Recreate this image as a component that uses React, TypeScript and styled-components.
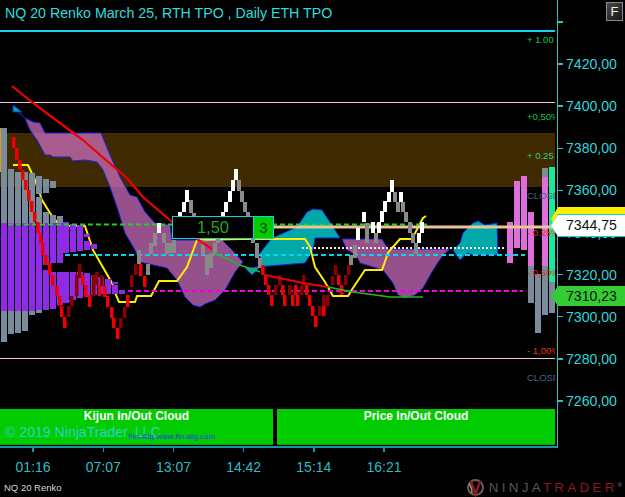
import React from "react";
import styled, { createGlobalStyle } from "styled-components";

const GlobalStyle = createGlobalStyle`
  html, body {
    margin: 0;
    padding: 0;
    background: #000;
    overflow: hidden;
  }
  body {
    font-family: "Liberation Sans", Arial, sans-serif;
  }
`;

const Page = styled.div`
  width: 625px;
  height: 497px;
  display: flex;
  flex-direction: column;
  position: relative;
  overflow: hidden;
  background: #000;
`;

const ChartRow = styled.div`
  display: flex;
  height: 448px;
`;

const Plot = styled.div`
  position: relative;
  width: 557px;
  height: 446px;
  border-right: 1.5px solid #1fc4cc;
  border-bottom: 2px solid #1a93a5;
  overflow: hidden;
  display: flex;
  flex-direction: column;
  justify-content: space-between;
`;

const ChartSvg = styled.svg`
  position: absolute;
  left: 0;
  top: 0;
`;

const TitleBar = styled.div`
  position: relative;
  height: 30px;
  margin-right: 2px;
  border-bottom: 2px solid #13d6ec;
  padding-left: 5px;
  color: #2fdcdc;
  font-size: 14.2px;
  line-height: 26px;
  white-space: nowrap;
`;

const CloudRow = styled.div`
  position: relative;
  display: flex;
  gap: 4px;
  height: 36px;
  margin-right: 2px;
  margin-bottom: 1px;
`;

const CloudPanel = styled.div<{ $width: number }>`
  position: relative;
  width: ${(p) => p.$width}px;
  background: #00cc00;
  border-bottom: 1px solid #00a800;
  color: #fff;
  font-size: 12px;
  font-weight: 700;
  line-height: 14px;
  text-align: center;
`;

const Copyright = styled.span`
  position: absolute;
  left: 5px;
  top: 16px;
  color: #2fd0c8;
  font-size: 14.1px;
  font-weight: 400;
  white-space: nowrap;
`;

const Watermark = styled.span`
  position: absolute;
  left: 128px;
  top: 21px;
  color: #1f62c4;
  font-size: 7.5px;
  font-weight: 700;
  white-space: nowrap;
`;

const LevelLabel = styled.span<{ $top: number; $color: string }>`
  position: absolute;
  left: 527px;
  top: ${(p) => p.$top}px;
  width: 28px;
  overflow: hidden;
  color: ${(p) => p.$color};
  font-size: 9.5px;
  line-height: 12px;
  white-space: nowrap;
`;

const PriceAxis = styled.div`
  display: flex;
  flex-direction: column;
  padding-top: 1px;
  flex: 1;
`;

const PriceRow = styled.div`
  display: flex;
  align-items: center;
  gap: 3px;
  height: 42.1px;
  color: #2fd6dc;
  font-size: 14.1px;
  white-space: nowrap;
`;

const PriceTick = styled.i`
  display: block;
  width: 5px;
  height: 1.5px;
  background: #1fc4cc;
`;

const TimeAxis = styled.div`
  display: flex;
  margin-left: -2px;
  height: 30px;
`;

const TimeCell = styled.div`
  width: 70.2px;
  display: flex;
  flex-direction: column;
  align-items: center;
  color: #2cbcc8;
  font-size: 14px;
`;

const TimeTick = styled.i`
  display: block;
  width: 1.5px;
  height: 4px;
  margin-bottom: 7px;
  background: #1a93a5;
`;

const Footer = styled.div`
  display: flex;
  justify-content: space-between;
  align-items: center;
  height: 19px;
  padding: 0 3px 0 4px;
  color: #d8d8d8;
  font-size: 9.5px;
`;

const Logo = styled.div`
  display: flex;
  align-items: center;
  gap: 4px;
  font-size: 13.5px;
  letter-spacing: 3.2px;
  white-space: nowrap;
`;

const LogoNinja = styled.span`
  color: #5c5650;
`;

const LogoTrader = styled.span`
  color: #8c1a1e;
`;

const LogoMarkReg = styled.sup`
  color: #8a8a8a;
  font-size: 6px;
  letter-spacing: 0;
`;

const FullscreenButton = styled.div`
  position: absolute;
  left: 606px;
  top: 2px;
  width: 15px;
  height: 17px;
  border: 1px solid #8a8a8a;
  background: linear-gradient(135deg, #4a4a4a, #141414);
  color: #f2f2f2;
  font-size: 13px;
  line-height: 17px;
  text-align: center;
`;

const PriceTag = styled.div<{ $top: number; $height: number; $bg: string }>`
  position: absolute;
  left: 551px;
  top: ${(p) => p.$top}px;
  width: 74px;
  height: ${(p) => p.$height}px;
  box-sizing: border-box;
  padding-left: 15px;
  background: ${(p) => p.$bg};
  clip-path: polygon(0 50%, 7px 0, 100% 0, 100% 100%, 7px 100%);
  color: #111;
  font-size: 14.1px;
  line-height: ${(p) => p.$height}px;
`;

const Bar = ({ x, y1, y2, fill, w = 6 }: { x: number; y1: number; y2: number; fill: string; w?: number }) => (
  <rect x={x} y={y1} width={w} height={y2 - y1} fill={fill} />
);

const GREY = "#7a8c9c";
const PURPLE = "#8f2be6";
const PINK = "#dc6fdc";

// x, top, bottom of the tpo profile on the left
const greyBars = [
  [1, 128, 223], [8, 169, 223], [15, 172, 223], [22, 172, 223], [29, 173, 223],
  [36, 176, 194], [36, 197, 223], [43, 179, 193], [43, 212, 223], [50, 181, 188],
  [50, 215, 223], [57, 216, 223],
  [1, 311, 342], [8, 311, 334], [15, 311, 333], [22, 311, 331], [29, 311, 315], [36, 310, 313],
];

const purpleBars = [
  [1, 223, 311], [8, 223, 311], [15, 223, 311], [22, 223, 311], [29, 223, 311], [36, 223, 310],
  [43, 223, 265], [43, 270, 310], [50, 223, 263], [50, 272, 309], [57, 223, 263], [57, 272, 305],
  [63, 222, 253], [63, 272, 303], [70, 224, 252], [70, 272, 300], [77, 225, 251], [77, 272, 298],
  [84, 234, 237], [84, 241, 250], [84, 273, 297], [91, 244, 249], [91, 275, 295], [98, 277, 294],
  [105, 279, 294], [112, 285, 294], [112, 282, 284], [119, 290, 294], [64, 300, 302],
];

const pinkBars = [
  [507, 222, 263, PINK], [514, 181, 248, PINK], [521, 176, 250, PINK], [528, 212, 266, PINK],
  [528, 266, 303, GREY], [535, 274, 333, GREY], [542, 168, 177, GREY], [542, 177, 266, PINK],
  [542, 266, 315, GREY], [549, 282, 313, GREY],
] as const;

type Candle = [number, number, number, "r" | "d" | "w" | "g"];

const candles: Candle[] = [
  [12, 137, 148, "r"], [15, 148, 160, "r"], [18, 160, 170, "r"], [21, 170, 180, "r"], [24, 180, 190, "r"],
  [27, 190, 201, "r"], [30, 201, 212, "r"], [33, 212, 222, "r"], [36, 222, 233, "r"], [39, 233, 243, "r"],
  [41, 243, 255, "r"], [44, 255, 265, "r"], [48, 263, 275, "r"], [51, 275, 286, "r"], [55, 286, 296, "r"],
  [58, 296, 306, "r"], [60, 306, 317, "r"], [63, 317, 328, "r"], [67, 306, 317, "d"], [70, 296, 306, "d"],
  [75, 275, 296, "d"], [78, 264, 278, "d"], [81, 275, 285, "r"], [84, 285, 297, "r"], [88, 295, 307, "r"],
  [92, 275, 296, "d"], [95, 272, 285, "d"], [98, 285, 296, "r"], [100, 275, 286, "d"], [103, 286, 297, "r"],
  [106, 296, 307, "r"], [110, 307, 318, "r"], [112, 318, 328, "r"], [116, 328, 339, "r"], [119, 318, 328, "d"],
  [123, 307, 318, "d"], [126, 295, 307, "r"], [130, 275, 287, "d"], [134, 264, 275, "d"], [139, 264, 276, "r"],
  [143, 276, 287, "r"], [146, 264, 275, "g"], [137, 250, 264, "g"], [149, 243, 254, "g"], [153, 233, 246, "g"],
  [157, 223, 233, "w"], [162, 233, 243, "g"], [165, 243, 254, "g"], [168, 243, 253, "g"], [172, 240, 253, "g"],
  [178, 212, 222, "w"], [182, 202, 212, "w"], [185, 190, 202, "w"], [189, 200, 213, "g"], [192, 213, 220, "g"],
  [201, 240, 255, "g"], [205, 255, 275, "g"], [209, 253, 268, "g"], [213, 243, 255, "g"], [216, 238, 243, "g"],
  [234, 169, 180, "w"], [231, 180, 191, "w"], [237, 180, 191, "g"], [228, 191, 202, "w"], [240, 191, 202, "g"],
  [224, 202, 212, "w"], [243, 202, 212, "g"], [221, 212, 220, "w"], [246, 212, 220, "g"], [251, 235, 243, "g"],
  [255, 243, 258, "g"], [258, 258, 268, "g"], [261, 265, 275, "r"], [264, 275, 285, "r"], [267, 285, 295, "r"],
  [270, 295, 306, "r"], [274, 285, 295, "d"], [278, 275, 285, "d"], [281, 285, 295, "r"], [283, 295, 306, "r"],
  [288, 285, 295, "d"], [291, 295, 306, "r"], [294, 285, 295, "r"], [296, 295, 306, "r"], [300, 285, 295, "d"],
  [302, 275, 285, "d"], [305, 285, 295, "r"], [308, 295, 306, "r"], [311, 306, 316, "r"], [314, 316, 327, "r"],
  [318, 306, 316, "d"], [322, 295, 306, "d"], [322, 306, 316, "r"], [326, 295, 306, "d"], [331, 276, 285, "d"],
  [334, 265, 275, "d"], [337, 275, 285, "r"], [340, 285, 295, "r"], [344, 275, 285, "d"], [347, 265, 275, "d"],
  [349, 255, 265, "g"], [353, 245, 258, "g"], [356, 228, 240, "w"], [362, 212, 222, "w"], [365, 223, 243, "g"],
  [371, 222, 233, "w"], [374, 233, 243, "g"], [377, 222, 233, "w"], [380, 211, 222, "w"], [383, 201, 212, "w"],
  [387, 192, 202, "w"], [390, 180, 192, "w"], [393, 192, 202, "g"], [399, 192, 202, "w"], [396, 202, 212, "g"],
  [401, 202, 212, "g"], [404, 212, 222, "g"], [408, 222, 233, "g"], [411, 233, 243, "g"], [414, 243, 254, "g"],
  [417, 233, 243, "w"], [420, 222, 233, "w"],
];

const candleColor = { r: "#f00000", d: "#8a0000", w: "#ffffff", g: "#8a8a8a" };

const purpleCloud =
  "13,107 25,118 33,122 40,123 45,133 101,133 110,155 120,177 130,195 137,197 145,212 155,223 170,225 172,240 222,240 232,250 243,262 235,272 225,290 215,300 205,304 200,307 193,305 185,297 177,280 167,268 140,262 135,250 125,233 118,210 110,187 103,170 97,162 85,160 73,161 70,157 53,157 50,155 45,155 37,140 30,130 25,118";
const purpleCloudRight =
  "342,239 382,239 388,249 450,249 443,255 433,270 423,288 415,295 405,298 398,295 393,283 383,270 360,263 356,255 347,250";
const tealCloudLeft =
  "245,268 252,275 260,267 260,253 272,238 297,227 307,212 313,209 322,210 330,222 340,238 315,238 313,250 305,263";
const tealCloudRight =
  "453,250 460,243 463,233 473,223 478,221 485,225 497,223 498,255 473,255 467,253 460,260";
const yellowLine =
  "13,165 28,165 35,180 42,200 50,213 60,226 85,226 93,250 112,283 116,295 119,302 135,302 137,296 151,296 159,281 177,281 187,267 197,240 240,239 272,239 305,239 310,247 315,267 325,282 333,296 348,296 353,288 365,270 382,270 388,253 392,248 400,239 412,239 423,218 426,216";

const prices = ["", "7420,00", "7400,00", "7380,00", "7360,00", "7340,00", "7320,00", "7300,00", "7280,00", "7260,00"];
const times = ["01:16", "07:07", "13:07", "14:42", "15:14", "16:21"];

const ChartDrawing = () => (
  <ChartSvg width={557} height={446} viewBox="0 0 557 446">
    <rect x={0} y={133} width={555} height={54} fill="#3f2a02" />
    <line x1={0} y1={102.5} x2={555} y2={102.5} stroke="#f6c6d0" />
    <line x1={0} y1={358.5} x2={555} y2={358.5} stroke="#f6c6d0" />

    <g fill="#d070c4" fillOpacity={0.72} stroke="#1a22d8" strokeWidth={1}>
      <polygon points={purpleCloud} />
      <polygon points={purpleCloudRight} />
    </g>
    <g fill="#00a8aa" stroke="#1a22d8" strokeWidth={1}>
      <polygon points="13,105 22,112 13,112" />
      <polygon points={tealCloudLeft} />
      <polygon points={tealCloudRight} />
    </g>

    <polyline points={yellowLine} fill="none" stroke="#ffee00" strokeWidth={2} />

    {greyBars.map(([x, a, b], i) => (
      <Bar key={i} x={x} y1={a} y2={b} fill={GREY} />
    ))}
    {purpleBars.map(([x, a, b], i) => (
      <Bar key={i} x={x} y1={a} y2={b} fill={PURPLE} />
    ))}
    {pinkBars.map(([x, a, b, c], i) => (
      <Bar key={i} x={x} y1={a} y2={b} fill={c} />
    ))}
    <Bar x={549} y1={167} y2={282} fill="#1de89a" />
    <Bar x={0} y1={128} y2={172} fill="#e89a10" w={1} />

    <line x1={8} y1={224.5} x2={427} y2={224.5} stroke="#22d022" strokeWidth={2} strokeDasharray="5 3" />
    <line x1={65} y1={255} x2={525} y2={255} stroke="#0cd0f0" strokeWidth={2} strokeDasharray="5 3" />
    <line x1={128} y1={291} x2={523} y2={291} stroke="#f000e0" strokeWidth={2} strokeDasharray="5 3" />
    <line x1={302} y1={248} x2={505} y2={248} stroke="#f4e4e4" strokeWidth={2} strokeDasharray="2 2" />
    <line x1={252} y1={227} x2={555} y2={227} stroke="#ecc49a" strokeWidth={3} />

    {candles.map(([x, a, b, c], i) => (
      <Bar key={i} x={x} y1={a} y2={b} fill={candleColor[c]} w={c === "w" || c === "g" ? 4 : 3.5} />
    ))}

    <polyline points="12,86 33,103 72,132 83,140 100,155 127,178 143,197 172,222 197,239 212,249" fill="none" stroke="#f00000" strokeWidth={2.2} />
    <polyline points="215,253 240,265 260,272" fill="none" stroke="#22b822" strokeWidth={1.6} />
    <polyline points="265,275 303,283 328,287" fill="none" stroke="#f00000" strokeWidth={1.8} />
    <polyline points="328,287 353,292 390,297 423,297" fill="none" stroke="#22b822" strokeWidth={1.6} />

    <rect x={172.5} y={216.5} width={81} height={22} fill="#000" stroke="#14d0d8" />
    <rect x={253.5} y={216.5} width={20} height={22} fill="#00cc00" stroke="#14d0d8" />
    <text x={213} y={233} fill="#1fa81f" fontSize={16.5} textAnchor="middle" fontFamily="Liberation Sans">
      1,50
    </text>
    <text x={263.5} y={233} fill="#0a3a0a" fontSize={15} textAnchor="middle" fontFamily="Liberation Sans">
      3
    </text>
  </ChartSvg>
);

const LogoMark = () => (
  <svg width={19} height={19} viewBox="0 0 19 19">
    <circle cx={9.5} cy={9.5} r={7.5} fill="none" stroke="#6a5f58" strokeWidth={2} />
    <path d="M5 3 L9.5 16 L14 3" fill="none" stroke="#8c1a1e" strokeWidth={2.4} />
    <path d="M3.5 6 Q6 10 6 15" fill="none" stroke="#9a9088" strokeWidth={1.6} />
  </svg>
);

export default function App() {
  return (
    <Page>
      <GlobalStyle />
      <ChartRow>
        <Plot>
          <ChartDrawing />
          <TitleBar>NQ 20 Renko March 25, RTH TPO , Daily ETH TPO</TitleBar>
          <LevelLabel $top={34} $color="#12c850">+ 1.00</LevelLabel>
          <LevelLabel $top={111} $color="#12c850">+0,50%</LevelLabel>
          <LevelLabel $top={150} $color="#2fd070">+ 0.25</LevelLabel>
          <LevelLabel $top={190} $color="#44608c">CLOSE</LevelLabel>
          <LevelLabel $top={227} $color="#f03010">- 0.25%</LevelLabel>
          <LevelLabel $top={267} $color="#d83010">- 0,50%</LevelLabel>
          <LevelLabel $top={345} $color="#f03010">- 1,00%</LevelLabel>
          <LevelLabel $top={372} $color="#44608c">CLOSE</LevelLabel>
          <LevelLabel $top={422} $color="#f03010">- 1,50%</LevelLabel>
          <CloudRow>
            <CloudPanel $width={273}>
              Kijun In/Out Cloud
              <Copyright>© 2019 NinjaTrader, LLC</Copyright>
              <Watermark>Fin-Alg www.fin-alg.com</Watermark>
            </CloudPanel>
            <CloudPanel $width={278}>Price In/Out Cloud</CloudPanel>
          </CloudRow>
        </Plot>
        <PriceAxis>
          {prices.map((p, i) => (
            <PriceRow key={i}>
              <PriceTick />
              {p}
            </PriceRow>
          ))}
        </PriceAxis>
      </ChartRow>
      <TimeAxis>
        {times.map((t) => (
          <TimeCell key={t}>
            <TimeTick />
            {t}
          </TimeCell>
        ))}
      </TimeAxis>
      <Footer>
        <span>NQ 20 Renko</span>
        <Logo>
          <LogoMark />
          <span>
            <LogoNinja>NINJA</LogoNinja>
            <LogoTrader>TRADER</LogoTrader>
            <LogoMarkReg>®</LogoMarkReg>
          </span>
        </Logo>
      </Footer>
      <FullscreenButton>F</FullscreenButton>
      <PriceTag $top={207} $height={24} $bg="#ffee00">7347,25</PriceTag>
      <PriceTag $top={214} $height={23} $bg="#14d0d8" />
      <PriceTag $top={215} $height={21} $bg="#ffffff">7344,75</PriceTag>
      <PriceTag $top={286} $height={20} $bg="#33cc33">7310,23</PriceTag>
    </Page>
  );
}
